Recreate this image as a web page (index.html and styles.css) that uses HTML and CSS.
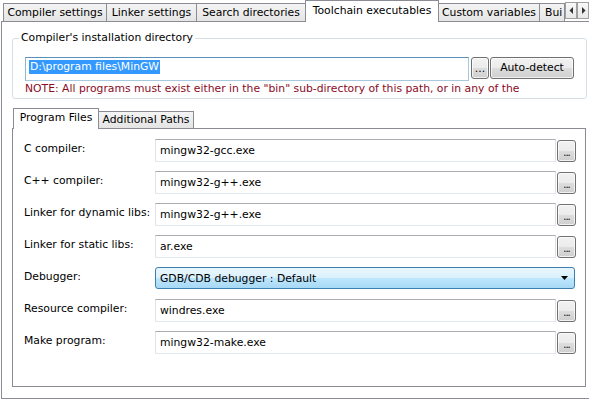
FILE: index.html
```html
<!DOCTYPE html>
<html>
<head>
<meta charset="utf-8">
<link rel="stylesheet" href="styles.css">
</head>
<body>
<div class="tabs">
  <div class="tab t1">Compiler settings</div>
  <div class="tab t2">Linker settings</div>
  <div class="tab t3">Search directories</div>
  <div class="tab sel t4">Toolchain executables</div>
  <div class="tab t5">Custom variables</div>
  <div class="tab t6">Bui</div>
  <div class="scroll">
    <div class="arr"><svg width="5" height="7" viewBox="0 0 5 7"><path d="M4 0 L4 7 L0.5 3.5 Z" fill="#333"/></svg></div>
    <div class="arr"><svg width="5" height="7" viewBox="0 0 5 7"><path d="M1 0 L1 7 L4.5 3.5 Z" fill="#333"/></svg></div>
  </div>
</div>
<div class="panel">
  <div class="group">
    <div class="legend">Compiler's installation directory</div>
    <div class="dirrow">
      <div class="input dir"><span class="hl">D:\program files\MinGW</span></div>
      <div class="btn dots">...</div>
      <div class="btn auto">Auto-detect</div>
    </div>
    <div class="note">NOTE: All programs must exist either in the "bin" sub-directory of this path, or in any of the</div>
  </div>
  <div class="itabs">
    <div class="itab isel">Program Files</div>
    <div class="itab">Additional Paths</div>
  </div>
  <div class="ipanel">
    <div class="row"><div class="label">C compiler:</div><div class="input field">mingw32-gcc.exe</div><div class="btn small">...</div></div>
    <div class="row"><div class="label">C++ compiler:</div><div class="input field">mingw32-g++.exe</div><div class="btn small">...</div></div>
    <div class="row"><div class="label">Linker for dynamic libs:</div><div class="input field">mingw32-g++.exe</div><div class="btn small">...</div></div>
    <div class="row"><div class="label">Linker for static libs:</div><div class="input field">ar.exe</div><div class="btn small">...</div></div>
    <div class="row"><div class="label">Debugger:</div><div class="combo"><span>GDB/CDB debugger : Default</span><svg width="7" height="4" viewBox="0 0 7 4"><path d="M0 0 L7 0 L3.5 4 Z" fill="#000"/></svg></div></div>
    <div class="row"><div class="label">Resource compiler:</div><div class="input field">windres.exe</div><div class="btn small">...</div></div>
    <div class="row"><div class="label">Make program:</div><div class="input field">mingw32-make.exe</div><div class="btn small">...</div></div>
  </div>
</div>
</body>
</html>
```
FILE: styles.css
```css
html, body {
  margin: 0;
  padding: 0;
  background: #fff;
  width: 589px;
  height: 400px;
  overflow: hidden;
  font-family: "DejaVu Sans", sans-serif;
  font-size: 10.8px;
  color: #000;
}

.tabs {
  display: flex;
  align-items: flex-end;
  height: 22px;
  padding-left: 3px;
  position: relative;
}

.tab {
  box-sizing: border-box;
  height: 19px;
  border: 1px solid #898c95;
  border-bottom: none;
  border-left: none;
  background: linear-gradient(#f4f4f4, #e4e4e4);
  text-align: center;
  line-height: 17px;
  white-space: nowrap;
  overflow: hidden;
}
.tab.t1 { border-left: 1px solid #898c95; width: 104px; }
.tab.t2 { width: 90px; }
.tab.t3 { width: 109px; }
.tab.t4 { width: 134px; }
.tab.t5 { width: 101px; }
.tab.t6 { width: 25px; text-align: left; padding-left: 5px; }
.tab.sel {
  height: 22px;
  background: #fff;
  border-left: 1px solid #898c95;
  margin-left: -1px;
  line-height: 19px;
  position: relative;
  z-index: 2;
}

.scroll {
  display: flex;
  align-self: flex-start;
  margin-top: 2px;
}
.arr {
  box-sizing: border-box;
  width: 12px;
  height: 17px;
  border: 1px solid #a0a0a0;
  background: linear-gradient(#f8f8f8, #e8e8e8);
  display: flex;
  align-items: center;
  justify-content: center;
}

.panel {
  box-sizing: border-box;
  margin-left: 1px;
  margin-top: -1px;
  width: 600px;
  height: 378px;
  border: 1px solid #898c95;
  padding-top: 16px;
  position: relative;
  z-index: 1;
}

.group {
  box-sizing: border-box;
  position: relative;
  margin-left: 10px;
  width: 575px;
  height: 61px;
  border: 1px solid #d5dfe5;
  border-radius: 3px;
  padding: 18px 0 0 12px;
}
.legend {
  position: absolute;
  top: -8px;
  left: 6px;
  padding: 0 2px;
  background: #fff;
  line-height: 14px;
}
.dirrow {
  display: flex;
  align-items: flex-start;
}
.input {
  box-sizing: border-box;
  border: 1px solid;
  border-color: #abadb3 #dbdfe6 #e3e9ef #e2e3ea;
  background: #fff;
  white-space: nowrap;
}
.dir {
  width: 444px;
  height: 24px;
  border-color: #5a8fb8 #a8c8e0 #a8c8e0 #8fb5d2;
  padding: 2px 0 0 3px;
}
.hl {
  display: inline-block;
  background: #3399ff;
  color: #fff;
  line-height: 14px;
  padding: 0 1px;
}
.btn {
  box-sizing: border-box;
  border: 1px solid #707070;
  border-radius: 3px;
  background: linear-gradient(#f2f2f2 0%, #ebebeb 50%, #dddddd 51%, #cfcfcf 100%);
  box-shadow: inset 0 0 0 1px rgba(255,255,255,0.7);
  text-align: center;
}
.dots {
  width: 18px;
  height: 22px;
  margin-left: 2px;
  line-height: 22px;
}
.auto {
  width: 84px;
  height: 22px;
  margin-left: 1px;
  line-height: 19px;
}
.note {
  color: #8b0a1e;
  margin-top: 1px;
  line-height: 13px;
  white-space: nowrap;
}

.itabs {
  display: flex;
  align-items: flex-end;
  height: 20px;
  margin-top: 9px;
  margin-left: 11px;
}
.itab {
  box-sizing: border-box;
  height: 17px;
  border: 1px solid #898c95;
  border-bottom: none;
  border-left: none;
  background: linear-gradient(#f4f4f4, #e4e4e4);
  line-height: 16px;
  width: 95px;
  text-align: center;
  white-space: nowrap;
  overflow: hidden;
}
.itab.isel {
  width: 86px;
  height: 21px;
  margin-bottom: -1px;
  background: #fff;
  border-left: 1px solid #898c95;
  line-height: 18px;
  position: relative;
  z-index: 2;
}

.ipanel {
  box-sizing: border-box;
  position: relative;
  z-index: 1;
  margin-left: 10px;
  width: 574px;
  height: 259px;
  border: 1px solid #898c95;
  padding: 10px 0 0 11px;
}
.row {
  display: flex;
  align-items: flex-start;
  height: 32px;
}
.label {
  width: 131px;
  line-height: 19px;
  white-space: nowrap;
}
.field {
  width: 401px;
  height: 23px;
  padding: 3px 0 0 4px;
  line-height: 15px;
}
.small {
  width: 19px;
  height: 22px;
  margin-left: 1px;
  margin-top: 1px;
  line-height: 24px;
  font-size: 10px;
  letter-spacing: -1px;
}
.combo {
  box-sizing: border-box;
  width: 420px;
  height: 22px;
  border: 1px solid #3c7fb1;
  border-radius: 3px;
  background: linear-gradient(#eaf6fd 0%, #d9f0fc 50%, #bee6fd 51%, #a7d9f5 100%);
  display: flex;
  align-items: center;
  justify-content: space-between;
  padding: 0 6px 0 4px;
}
```
